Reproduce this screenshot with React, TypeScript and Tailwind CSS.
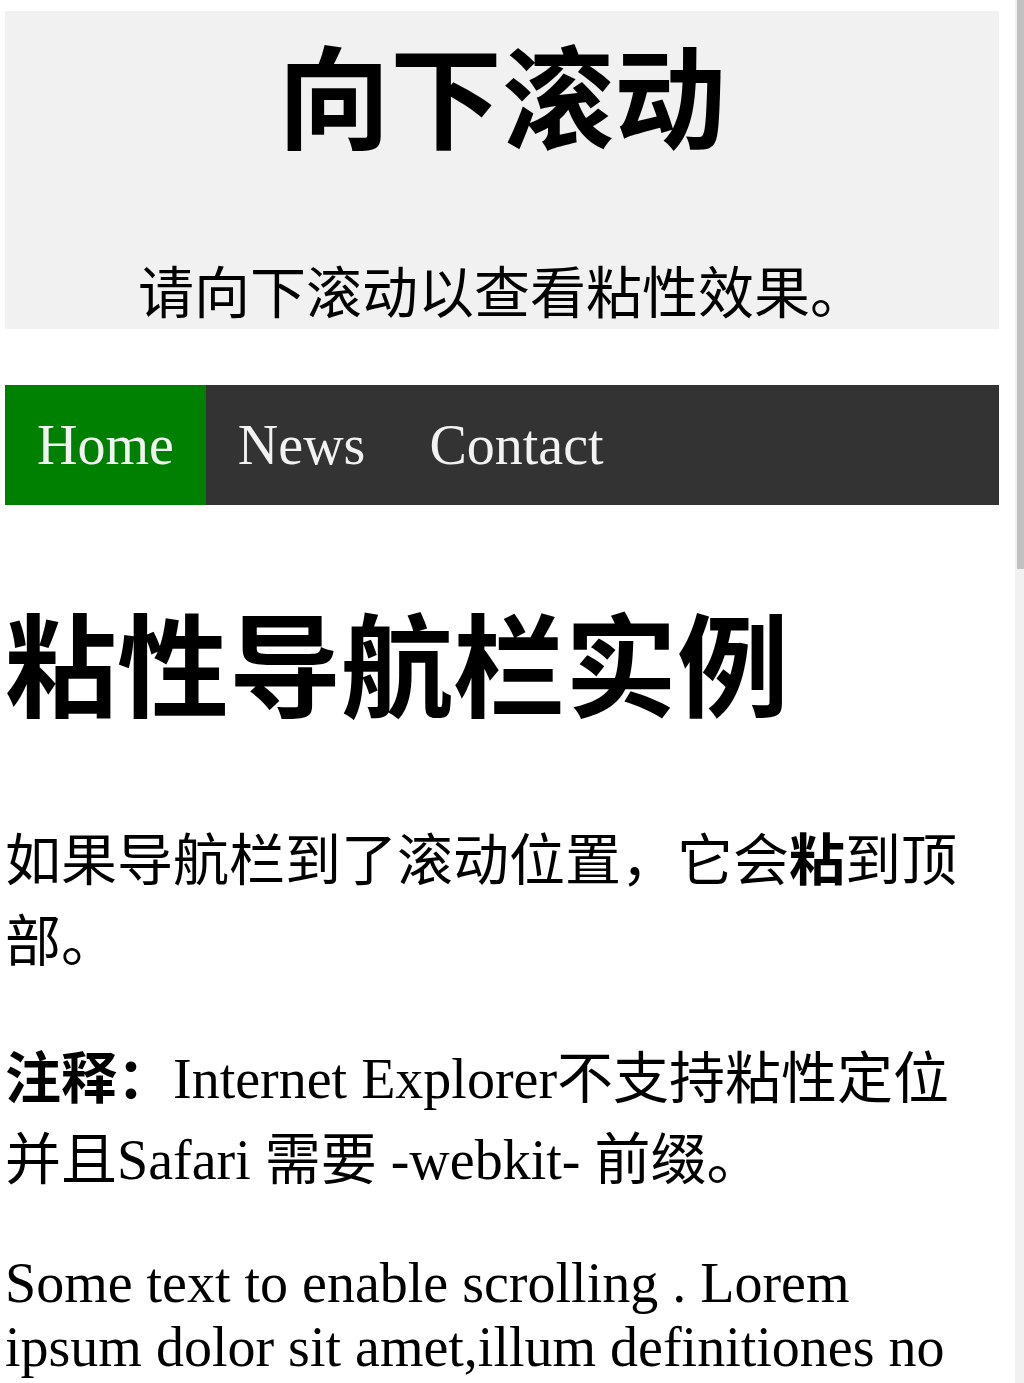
const navItems = [
  { title: "Home", active: true },
  { title: "News", active: false },
  { title: "Contact", active: false },
]

export default function App() {
  return (
    <div className="flex h-[1383px] w-[1024px] overflow-hidden bg-white font-['Liberation_Serif','Noto_Sans_CJK_SC',serif] text-black">
      <div className="w-[1015px] pl-[5px] pt-[11px]">
        <div className="w-[994px]">
          {/* header */}
          <div className="bg-[#f1f1f1] text-center">
            <h2 className="mb-[75px] text-[112px] font-bold leading-[normal]">向下滚动</h2>
            <p className="text-[56px] leading-[normal]">请向下滚动以查看粘性效果。</p>
          </div>

          {/* navbar */}
          <nav className="mt-[56px] flex h-[120px] items-center bg-[#333333]">
            {navItems.map((item) => (
              <a
                key={item.title}
                href="#"
                className={
                  item.active
                    ? "flex h-full items-center bg-[#008000] px-[32px] pb-[1px] text-[56px] leading-[normal] text-[#f2f2f2]"
                    : "flex h-full items-center px-[32px] pb-[1px] text-[56px] leading-[normal] text-[#f2f2f2]"
                }
              >
                {item.title}
              </a>
            ))}
          </nav>

          {/* content */}
          <div className="text-[56px] leading-[normal]">
            <h3 className="my-[74px] text-[112px] font-bold leading-[normal]">粘性导航栏实例</h3>
            <p className="mb-[56px]">
              如果导航栏到了滚动位置，它会<b className="font-bold">粘</b>到顶部。
            </p>
            <p className="mb-[56px]">
              <b className="font-bold">注释：</b>Internet Explorer不支持粘性定位并且Safari 需要 -webkit- 前缀。
            </p>
            <p className="mb-[56px]">
              Some text to enable scrolling . Lorem ipsum dolor sit amet,illum definitiones no quo, maluisset
              concludaturque et eum, altera fabulas ut quo. Atqui causae gloriatur ius te, id agam omnis evertitur
              eum. Affert laboramus repudiandae nec et. Inciderint efficiantur his ad. Eum no molestiae
              voluptatibus.
            </p>
          </div>
        </div>
      </div>

      {/* scrollbar */}
      <div className="flex w-[9px] justify-end bg-[#f1f1f1]">
        <div className="h-[569px] w-[7px] bg-[#c1c1c1]" />
      </div>
    </div>
  )
}
